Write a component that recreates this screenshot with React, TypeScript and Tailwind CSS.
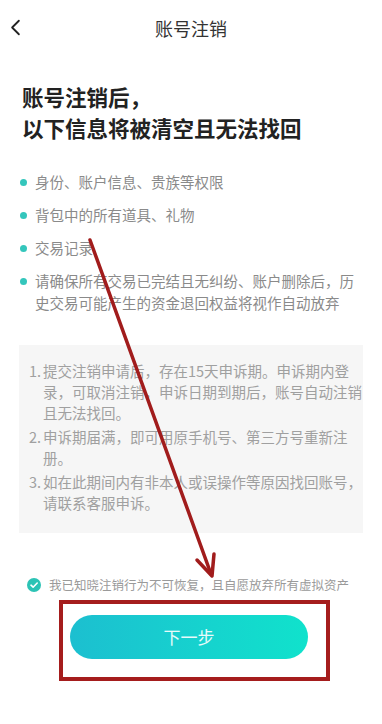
import { ChevronLeft } from 'lucide-react';

const bullets = [
  ['身份、账户信息、贵族等权限'],
  ['背包中的所有道具、礼物'],
  ['交易记录'],
  ['请确保所有交易已完结且无纠纷、账户删除后，历', '史交易可能产生的资金退回权益将视作自动放弃'],
];

const notes = [
  ['提交注销申请后，存在15天申诉期。申诉期内登', '录，可取消注销，申诉日期到期后，账号自动注销', '且无法找回。'],
  ['申诉期届满，即可用原手机号、第三方号重新注', '册。'],
  ['如在此期间内有非本人或误操作等原因找回账号，', '请联系客服申诉。'],
];

export default function App() {
  return (
    <div className="relative w-[382px] h-[724px] overflow-hidden bg-white font-['Noto_Sans_CJK_SC','Noto_Sans',sans-serif]">
      {/* header */}
      <div className="relative flex h-[56px] items-center justify-center">
        <ChevronLeft className="absolute left-[2px] top-[14px] h-[27px] w-[27px] text-[#222]" strokeWidth={1.6} />
        <h1 className="text-[18px] text-[#333]">账号注销</h1>
      </div>

      <div className="mt-[25px] pl-[22px] text-[21.5px] font-bold leading-[31px] text-[#222]">
        账号注销后，
        <br />
        以下信息将被清空且无法找回
      </div>

      <ul className="mt-[28px] flex flex-col gap-[11px] pl-[20px]">
        {bullets.map((lines, i) => (
          <li key={i} className="flex">
            <span className="mt-[8px] mr-[8px] h-[7px] w-[7px] shrink-0 rounded-full bg-[#34c6bc]" />
            <p className="text-[14.5px] leading-[22px] text-[#8a8a8a] whitespace-nowrap">
              {lines.map((l, j) => (
                <span key={j} className="block">{l}</span>
              ))}
            </p>
          </li>
        ))}
      </ul>

      <div className="mx-[19px] mt-[31px] flex flex-col gap-[3px] bg-[#f6f6f6] pt-[15px] pb-[20px] pl-[10px]">
        {notes.map((lines, i) => (
          <div key={i} className="flex text-[14.5px] leading-[21px] text-[#a0a0a0]">
            <span className="w-[14px] shrink-0">{i + 1}.</span>
            <div className="whitespace-nowrap">
              {lines.map((l, j) => (
                <span key={j} className="block">{l}</span>
              ))}
            </div>
          </div>
        ))}
      </div>

      <div className="mt-[42px] flex items-center pl-[27px]">
        <span className="flex h-[14px] w-[14px] items-center justify-center rounded-full bg-[#2cc3b5]">
          <svg viewBox="0 0 14 14" className="h-[14px] w-[14px]">
            <path d="M4 7.2 L6.1 9.2 L10.2 5" fill="none" stroke="#fff" strokeWidth="1.6" strokeLinecap="round" strokeLinejoin="round" />
          </svg>
        </span>
        <span className="ml-[8px] text-[12.5px] leading-[20px] text-[#9a9a9a]">
          我已知晓注销行为不可恢复，且自愿放弃所有虚拟资产
        </span>
      </div>

      <div className="mt-[5px] ml-[59px] h-[81px] w-[271px] border-[4px] border-[#a51d1d]">
        <button className="mt-[11px] ml-[7px] flex h-[44px] w-[238px] items-center justify-center rounded-full bg-gradient-to-r from-[#1cbfd0] to-[#10e2cc] text-[17px] text-white/90">
          下一步
        </button>
      </div>

      {/* annotation arrow */}
      <svg className="pointer-events-none absolute inset-0" width="382" height="724" viewBox="0 0 382 724">
        <line x1="90" y1="240" x2="211" y2="574" stroke="#a11c1c" strokeWidth="3.5" strokeLinecap="round" />
        <polyline points="197,560 212,576 214,554" fill="none" stroke="#a11c1c" strokeWidth="3.5" strokeLinecap="round" strokeLinejoin="round" />
      </svg>
    </div>
  );
}
